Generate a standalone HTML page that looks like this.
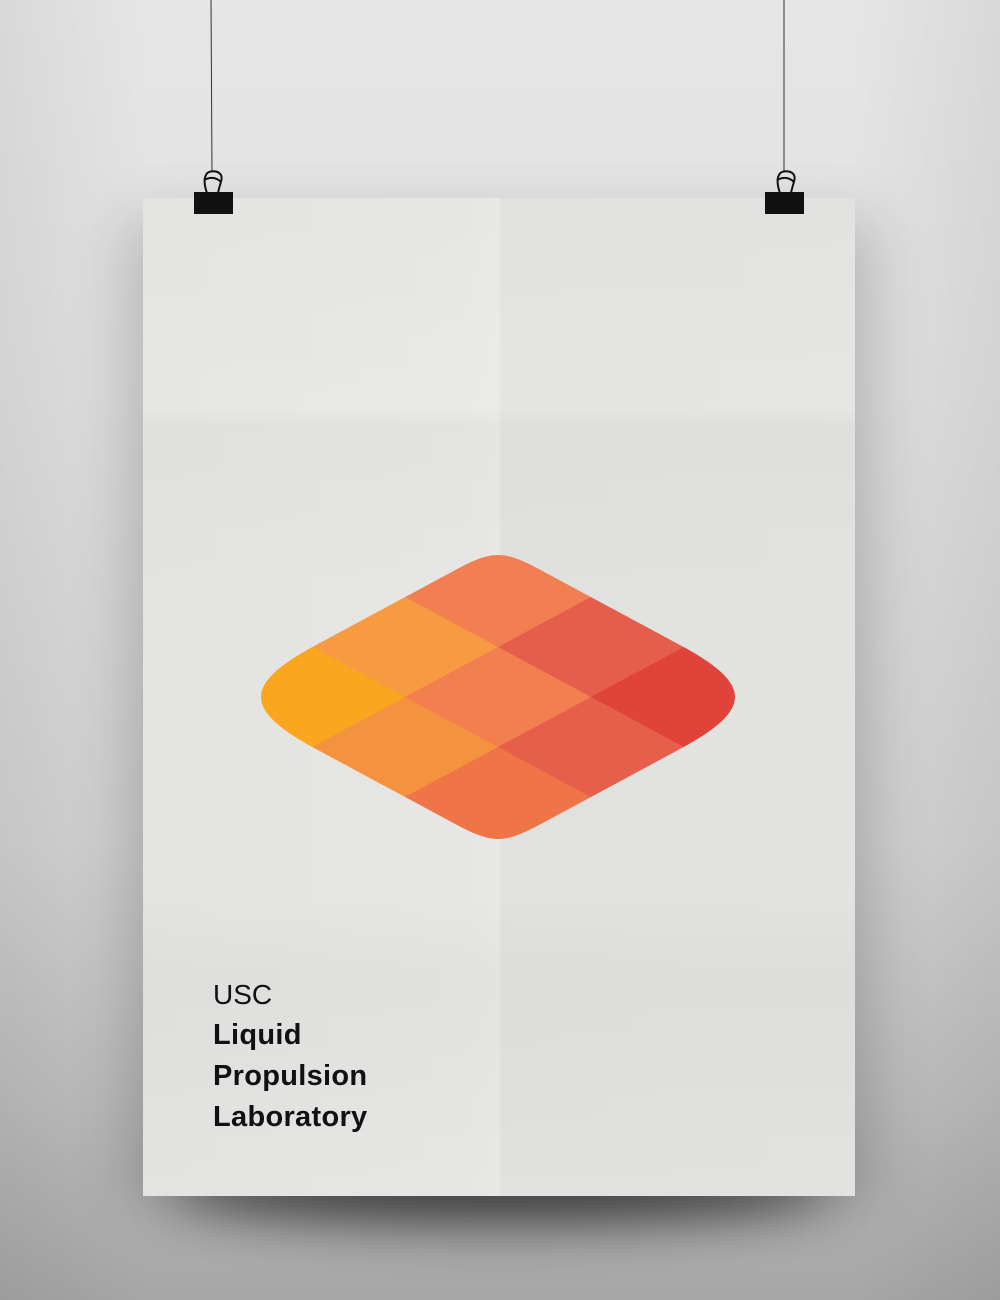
<!DOCTYPE html>
<html><head><style>
html,body{margin:0;padding:0}
body{width:1000px;height:1300px;position:relative;overflow:hidden;
background:linear-gradient(180deg,#e6e6e6 0%,#e0e0e0 30%,#d2d2d2 65%,#bcbcbc 85%,#a6a6a6 100%);}
.vig{position:absolute;left:0;top:0;width:1000px;height:1300px;background:linear-gradient(90deg,rgba(0,0,0,.06),rgba(0,0,0,0) 15%,rgba(0,0,0,0) 85%,rgba(0,0,0,.06))}
.shadow{position:absolute;left:170px;top:1150px;width:660px;height:70px;background:#222;filter:blur(28px);border-radius:50%;opacity:.85}
.shadow2{position:absolute;left:130px;top:220px;width:740px;height:980px;background:#000;filter:blur(30px);opacity:.2}
.poster{position:absolute;left:143px;top:198px;width:712px;height:998px;
background:linear-gradient(90deg,#e3e3e1 0%,#e6e6e4 45%,#e8e8e6 50%,#e1e1df 50.3%,#e2e2e0 100%);}
.poster:after{content:"";position:absolute;left:0;top:0;right:0;bottom:0;
background:linear-gradient(180deg,rgba(255,255,255,0) 0%,rgba(255,255,255,.12) 21%,rgba(0,0,0,.015) 23%,rgba(0,0,0,0) 40%,rgba(0,0,0,0) 70%,rgba(0,0,0,.025) 78%,rgba(0,0,0,0) 100%)}
.txt{position:absolute;left:213px;top:974px;font-family:"Liberation Sans",sans-serif;font-size:28px;line-height:41px;color:#111}
.txt b{display:block;font-weight:bold;font-size:29px;letter-spacing:.3px}
</style></head><body>
<div class="vig"></div>
<div class="shadow2"></div>
<div class="shadow"></div>
<div class="poster"></div>
<svg width="1000" height="1300" style="position:absolute;left:0;top:0">
<line x1="211" y1="0" x2="212" y2="172" stroke="#333" stroke-width="1"/>
<line x1="784" y1="0" x2="784" y2="172" stroke="#333" stroke-width="1"/>
<g fill="none" stroke="#111" stroke-width="2">
<path d="M207,193 C204,185 204,178 206,175 C208,170 218,170 221,175 C223,179 220,183 218,193"/>
<path d="M204,180 C210,177 216,177 221,182"/>
<path d="M780,193 C777,185 777,178 779,175 C781,170 791,170 794,175 C796,179 793,183 791,193"/>
<path d="M777,180 C783,177 789,177 794,182"/>
</g>
<rect x="194" y="192" width="39" height="22" fill="#111"/>
<rect x="765" y="192" width="39" height="22" fill="#111"/>
<defs><clipPath id="c"><path d="M454,570.6 C492.7,549.8 503.3,549.8 542,570.6 L680,645 C753.3,684.3 753.3,709.7 680,749 L542,823.4 C503.3,844.2 492.7,844.2 454,823.4 L316,749 C242.7,709.7 242.7,684.3 316,645 Z"/></clipPath></defs>
<g clip-path="url(#c)">
<g transform="matrix(93,50,-93,50,498,547)">
<rect x="0" y="0" width="1.01" height="1.01" fill="#f27f51"/>
<rect x="1" y="0" width="1.01" height="1.01" fill="#e55e4b"/>
<rect x="2" y="0" width="1.01" height="1.01" fill="#df4339"/>
<rect x="0" y="1" width="1.01" height="1.01" fill="#f79a42"/>
<rect x="1" y="1" width="1.01" height="1.01" fill="#f27f4f"/>
<rect x="2" y="1" width="1.01" height="1.01" fill="#e65f4a"/>
<rect x="0" y="2" width="1.01" height="1.01" fill="#fba61f"/>
<rect x="1" y="2" width="1.01" height="1.01" fill="#f4923f"/>
<rect x="2" y="2" width="1.01" height="1.01" fill="#ef7448"/>
</g>
</g>
</svg>
<div class="txt">USC<b>Liquid</b><b>Propulsion</b><b>Laboratory</b></div>
</body></html>
